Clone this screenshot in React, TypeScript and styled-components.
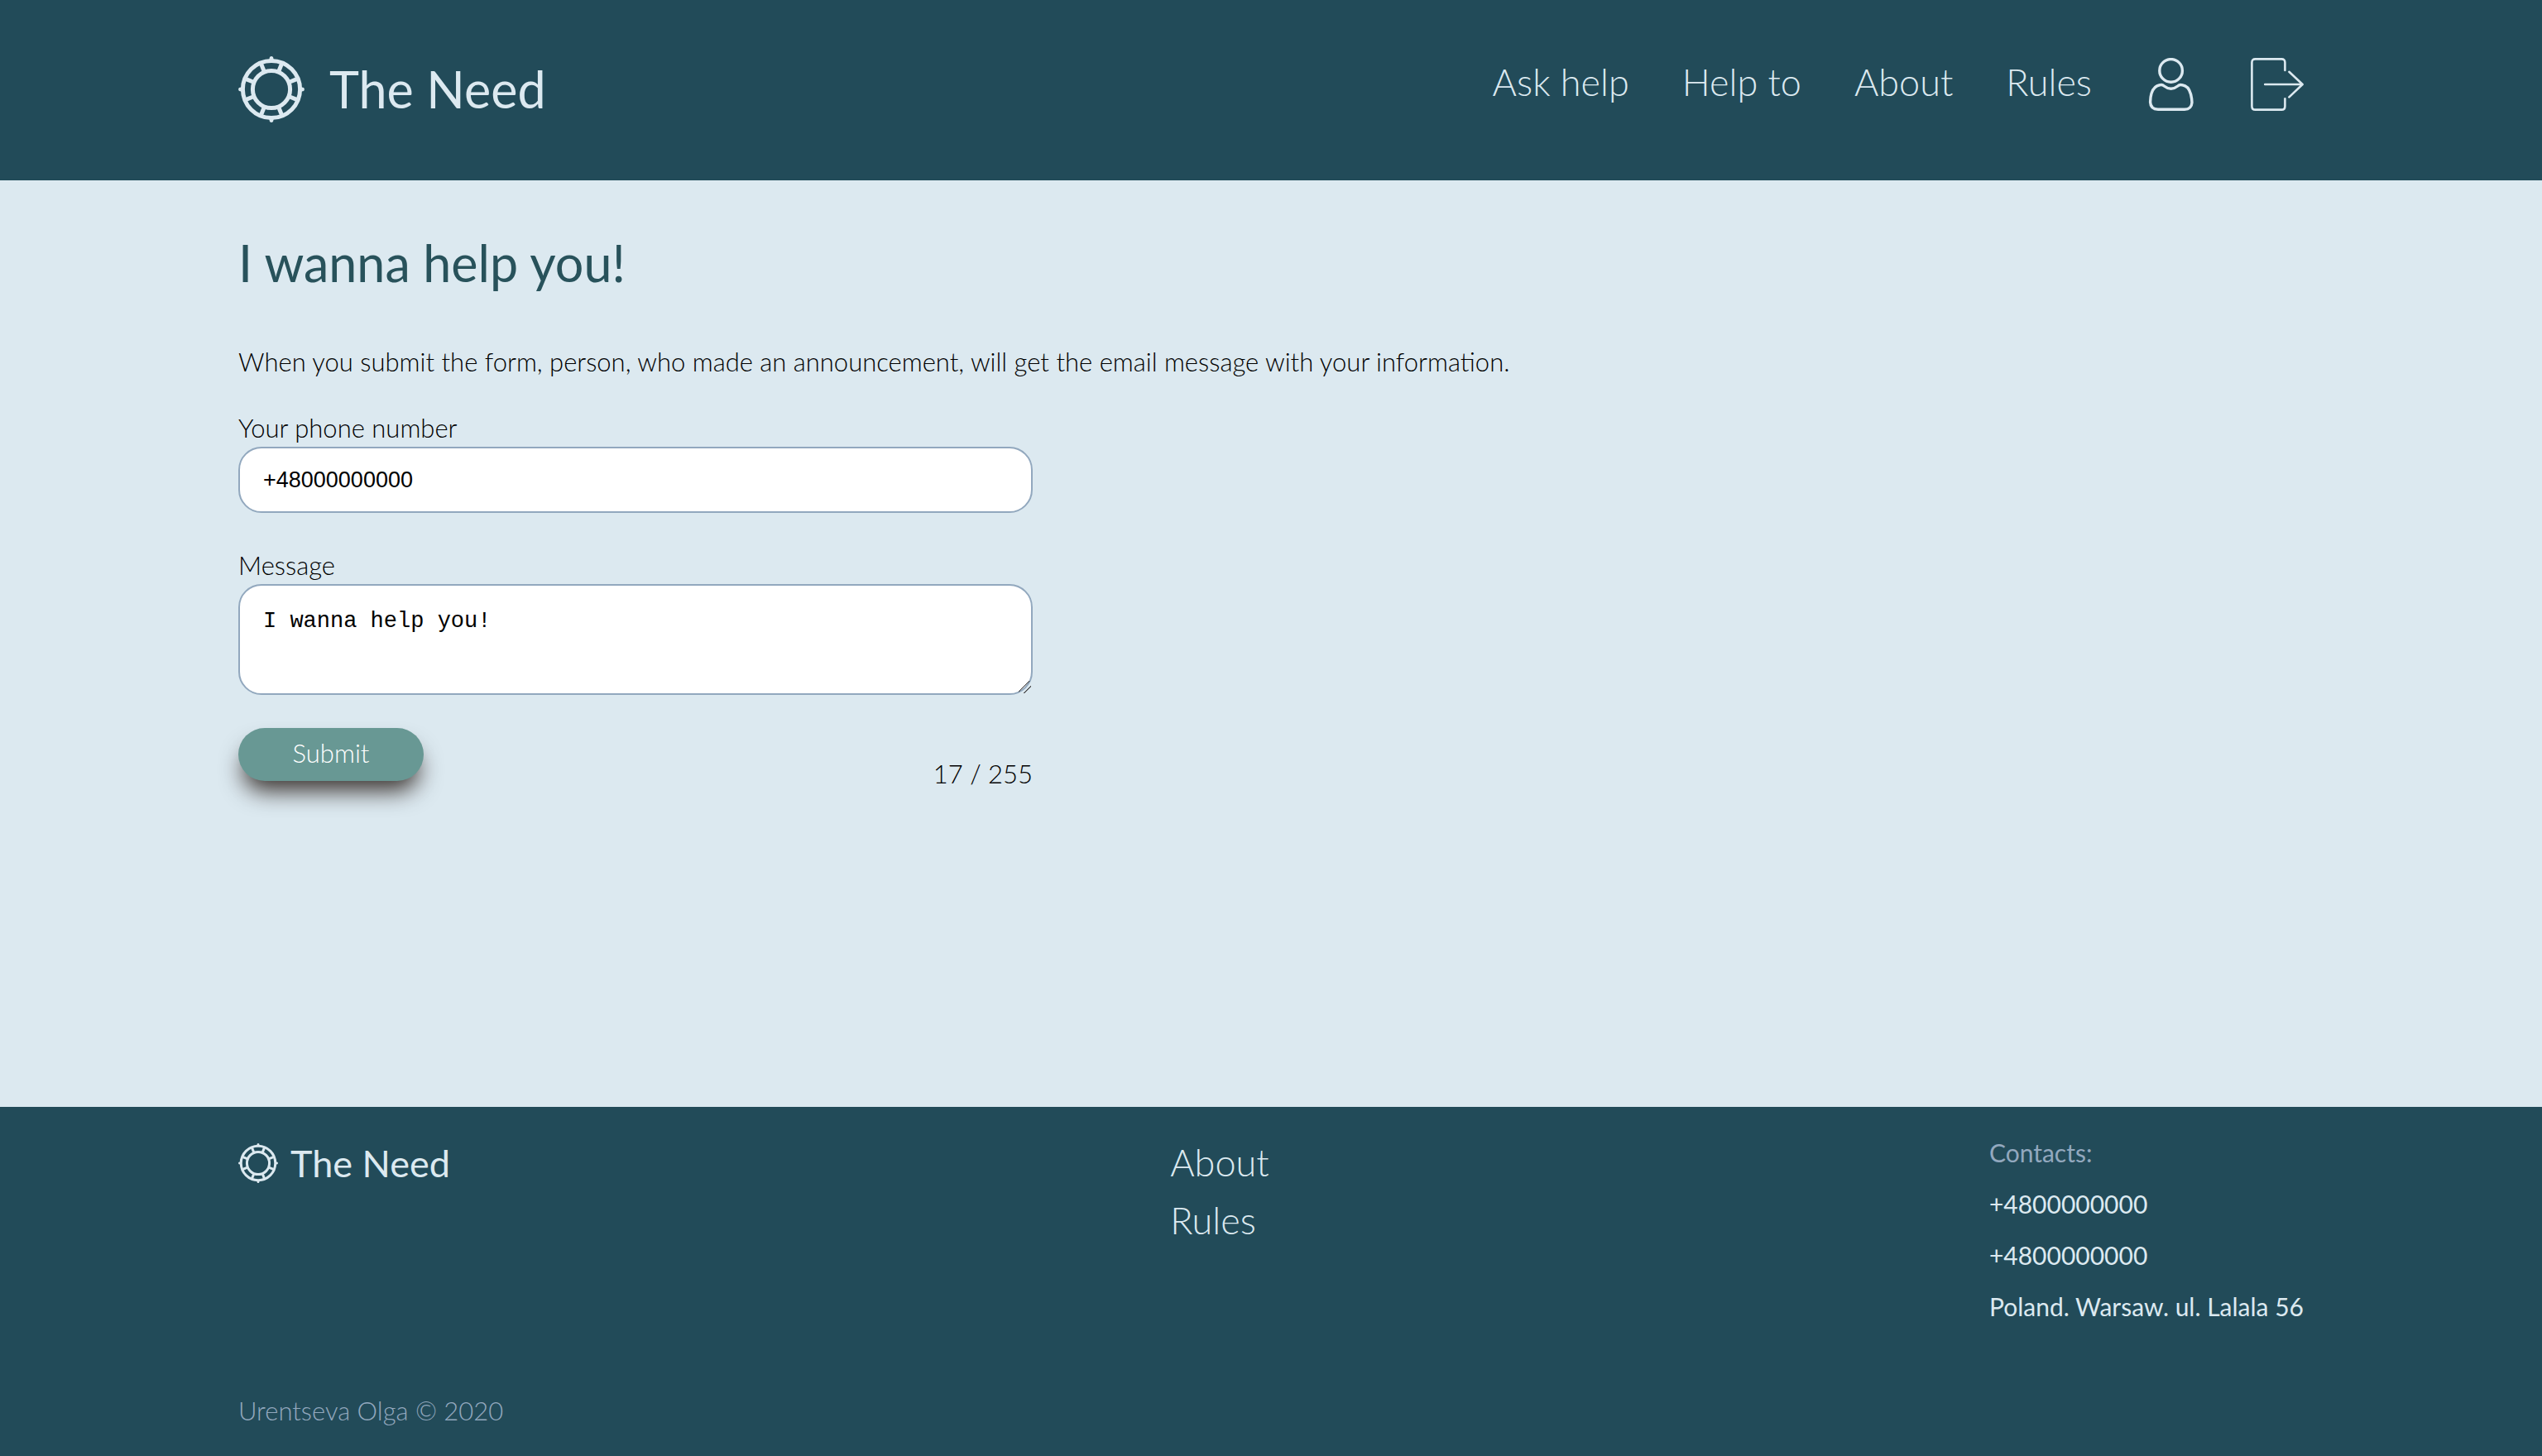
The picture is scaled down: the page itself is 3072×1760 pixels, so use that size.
import React, { useState } from 'react';
import styled, { createGlobalStyle } from 'styled-components';

const color = {
  dark: '#224b59',
  light: '#dce9f0',
  title: '#28525b',
  text: '#000',
  muted: '#92a8be',
  accent: '#689894',
};

const GlobalStyle = createGlobalStyle`
  *, *::before, *::after { box-sizing: border-box; }
  body {
    margin: 0;
    background: ${color.light};
    color: ${color.text};
    font: 300 31px/46px Lato, "Open Sans", sans-serif;
  }
  h1, p, ul, address { margin: 0; padding: 0; }
  a { color: inherit; text-decoration: none; }
`;

const Page = styled.div`
  display: flex;
  flex-direction: column;
  min-height: 100vh;
`;

const Header = styled.header`
  display: flex;
  justify-content: space-between;
  align-items: flex-start;
  padding: 64px 288px 66px;
  background: ${color.dark};
  color: ${color.light};
`;

const Logo = styled.a<{ $small?: boolean }>`
  display: flex;
  align-items: center;
  gap: ${p => (p.$small ? 15 : 30)}px;
  font-size: ${p => (p.$small ? 45 : 61)}px;
  font-weight: 400;
  line-height: 88px;

  svg {
    width: ${p => (p.$small ? 48 : 80)}px;
    height: ${p => (p.$small ? 48 : 80)}px;
  }
`;

const HeaderNav = styled.nav`
  display: flex;
  align-items: flex-end;
  gap: 64px;
`;

const NavLink = styled.a`
  font-size: 45px;
  line-height: 70px;
`;

const IconButton = styled.button`
  display: flex;
  padding: 0;
  border: 0;
  background: none;
  color: inherit;
  cursor: pointer;

  svg {
    width: 64px;
    height: 64px;
  }
`;

const Main = styled.main`
  flex: 1;
  padding: 56px 288px;
`;

const Title = styled.h1`
  margin-bottom: 52px;
  color: ${color.title};
  font-size: 61px;
  font-weight: 400;
  line-height: 88px;
`;

const Intro = styled.p`
  margin-bottom: 34px;
`;

const Form = styled.form`
  display: flex;
  flex-direction: column;
  gap: 40px;
  max-width: 960px;
`;

const Field = styled.label`
  display: flex;
  flex-direction: column;
`;

const Input = styled.input`
  height: 80px;
  padding: 0 28px;
  border: 2px solid ${color.muted};
  border-radius: 28px;
  background: #fff;
  color: #000;
  font: 400 27px "Liberation Sans", Arial, sans-serif;
`;

const TextArea = styled.textarea`
  height: 134px;
  padding: 28px;
  border: 2px solid ${color.muted};
  border-radius: 28px;
  background: #fff;
  color: #000;
  font: 400 27px/30px "Liberation Mono", "Courier New", monospace;
  resize: both;

  &::-webkit-resizer {
    background: linear-gradient(
      135deg,
      transparent 40%,
      #4a4a4a 41% 46%,
      transparent 47% 67%,
      #4a4a4a 68% 73%,
      transparent 74%
    );
  }
`;

const FormFooter = styled.div`
  display: flex;
  justify-content: space-between;
  align-items: flex-start;
`;

const SubmitButton = styled.button`
  width: 224px;
  height: 64px;
  padding: 0 0 4px;
  border: 0;
  border-radius: 32px;
  background: ${color.accent};
  box-shadow: 0 18px 28px -6px rgba(20, 8, 0, 0.8);
  color: #fff;
  font: inherit;
  cursor: pointer;
`;

const Counter = styled.p`
  margin-top: 32px;
`;

const Footer = styled.footer`
  display: flex;
  flex-direction: column;
  gap: 72px;
  padding: 24px 288px 32px;
  background: ${color.dark};
  color: ${color.light};
`;

const FooterColumns = styled.div`
  display: flex;
  justify-content: space-between;
  align-items: flex-start;
`;

const FooterNav = styled.nav`
  display: flex;
  flex-direction: column;
  padding-top: 8px;
`;

const Contacts = styled.address`
  font-size: 30px;
  font-style: normal;
  font-weight: 400;
  line-height: 62px;
`;

const Muted = styled.p`
  color: ${color.muted};
`;

const spokes = [22, 68, 112, 158, 202, 248, 292, 338];

const LifebuoyIcon = () => (
  <svg viewBox="0 0 80 80" fill="none" stroke="currentColor" aria-hidden="true">
    <circle cx="40" cy="40" r="34.6" strokeWidth="5" />
    <circle cx="40" cy="40" r="22.6" strokeWidth="5" />
    {spokes.map(a => (
      <path key={a} d="M40 16V7" strokeWidth="5" transform={`rotate(${a} 40 40)`} />
    ))}
    {[0, 90, 180, 270].map(a => (
      <path key={a} d="M37 5L38 1Q40-.8 42 1L43 5z" fill="currentColor" stroke="none" transform={`rotate(${a} 40 40)`} />
    ))}
  </svg>
);

const UserIcon = () => (
  <svg viewBox="0 0 64 64" fill="none" stroke="currentColor" strokeWidth="3.4" strokeLinejoin="round" aria-hidden="true">
    <circle cx="31.6" cy="15.4" r="13.8" />
    <path d="M18 32.8Q21 31.8 23.4 34Q31.6 40.6 39.8 34Q42.2 31.8 45.2 32.8Q52.8 33.6 55.6 44Q57 50 57 54Q56.4 62.2 48 62.2H16Q7 62.2 6.6 53.4Q6.8 47 8 43Q11 33.8 18 32.8z" />
  </svg>
);

const LogoutIcon = () => (
  <svg viewBox="0 0 64 64" fill="none" stroke="currentColor" strokeWidth="2.6" strokeLinecap="round" strokeLinejoin="round" aria-hidden="true">
    <path d="M41.4 15V5.6Q41.4 1.4 37.2 1.4H5.6Q1.4 1.4 1.4 5.6V58.4Q1.4 62.6 5.6 62.6H37.2Q41.4 62.6 41.4 58.4V49.4" />
    <path d="M17.2 32H62.4M46.4 16.8L62.6 32L46.4 47.4" />
  </svg>
);

const menu = ['Ask help', 'Help to', 'About', 'Rules'];
const limit = 255;

export default function App() {
  const [phone, setPhone] = useState('+48000000000');
  const [message, setMessage] = useState('I wanna help you!');

  return (
    <Page>
      <GlobalStyle />
      <Header>
        <Logo href="#home">
          <LifebuoyIcon />
          The Need
        </Logo>
        <HeaderNav aria-label="Main">
          {menu.map(item => (
            <NavLink key={item} href="#">{item}</NavLink>
          ))}
          <IconButton type="button" aria-label="Profile"><UserIcon /></IconButton>
          <IconButton type="button" aria-label="Log out"><LogoutIcon /></IconButton>
        </HeaderNav>
      </Header>

      <Main>
        <Title>I wanna help you!</Title>
        <Intro>
          When you submit the form, person, who made an announcement, will get the email message with your information.
        </Intro>
        <Form onSubmit={e => e.preventDefault()}>
          <Field>
            Your phone number
            <Input type="tel" value={phone} onChange={e => setPhone(e.target.value)} />
          </Field>
          <Field>
            Message
            <TextArea maxLength={limit} value={message} onChange={e => setMessage(e.target.value)} />
          </Field>
          <FormFooter>
            <SubmitButton type="submit">Submit</SubmitButton>
            <Counter>{message.length} / {limit}</Counter>
          </FormFooter>
        </Form>
      </Main>

      <Footer>
        <FooterColumns>
          <Logo href="#home" $small>
            <LifebuoyIcon />
            The Need
          </Logo>
          <FooterNav aria-label="Footer">
            <NavLink href="#">About</NavLink>
            <NavLink href="#">Rules</NavLink>
          </FooterNav>
          <Contacts>
            <Muted>Contacts:</Muted>
            <p>+4800000000</p>
            <p>+4800000000</p>
            <p>Poland. Warsaw. ul. Lalala 56</p>
          </Contacts>
        </FooterColumns>
        <Muted>Urentseva Olga © 2020</Muted>
      </Footer>
    </Page>
  );
}
